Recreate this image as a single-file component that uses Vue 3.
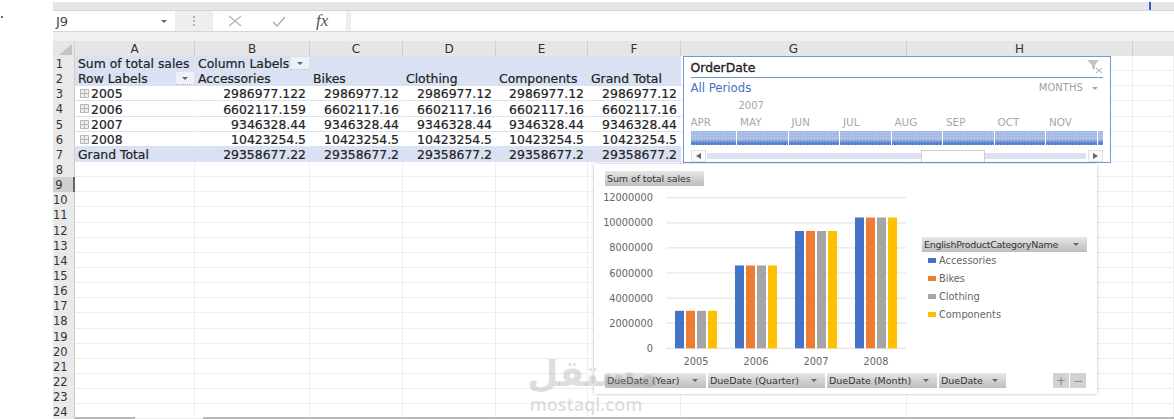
<template>
  <div class="app">
    <span class="stray-dot"></span>
    <div class="top-strip"><span class="top-tick"></span></div>

    <div class="formula-bar">
      <div class="name-box">
        <span>J9</span>
        <i class="caret caret-dark"></i>
      </div>
      <div class="dots"><b></b><b></b><b></b></div>
      <div class="fx-box">
        <svg width="14" height="12" viewBox="0 0 14 12">
          <path d="M1 1l12 10M13 1L1 11" stroke="#b4b4b4" stroke-width="1.3" fill="none" />
        </svg>
        <svg width="14" height="12" viewBox="0 0 14 12">
          <path d="M1 7l4 4 8-9" stroke="#b4b4b4" stroke-width="1.6" fill="none" />
        </svg>
        <span class="fx">fx</span>
      </div>
      <div class="formula-input"></div>
    </div>
    <div class="ribbon-gap"></div>

    <div class="sheet">
      <div class="corner"><span></span></div>
      <div v-for="c in columns" :key="c" class="col-head">{{ c }}</div>

      <template v-for="(row, r) in rows" :key="r">
        <div class="row-head" :class="{ active: r === 8 }">{{ r + 1 }}</div>
        <div
          v-for="(cell, c) in row"
          :key="c"
          class="cell"
          :class="cellClass(r, c)"
        >
          <svg v-if="r >= 2 && r <= 5 && c === 0" class="plus" width="9" height="9" viewBox="0 0 9 9">
            <path d="M.5.5h8v8h-8zM4.5.5v8M.5 4.5h8" stroke="#b7b7b7" fill="#eee" />
          </svg>
          <span>{{ cell }}</span>
          <span v-if="(r === 0 && c === 1) || (r === 1 && c === 0)" class="filter-btn">
            <i class="caret caret-dark"></i>
          </span>
        </div>
      </template>

      <div class="slicer">
        <div class="slicer-title">
          <span>OrderDate</span>
          <svg width="16" height="14" viewBox="0 0 16 14">
            <path d="M0 0h12L8 5v5L5 8V5z" fill="#c4c4c4" />
            <path d="M9 8l6 5M15 8l-6 5" stroke="#a8a8a8" fill="none" />
          </svg>
        </div>
        <div class="slicer-range">
          <span class="all-periods">All Periods</span>
          <span class="months-pick">MONTHS <i class="caret caret-light"></i></span>
        </div>
        <div class="slicer-year">2007</div>
        <div class="tiles">
          <div v-for="m in months" :key="m.label" class="tile" :class="{ first: m.first }">
            <span class="tile-label">{{ m.label }}</span>
            <span class="tile-bar"></span>
          </div>
          <div class="tile tail"><span class="tile-label"></span><span class="tile-bar"></span></div>
        </div>
        <div class="slicer-scroll">
          <span class="scroll-btn"><i class="tri-left"></i></span>
          <span class="scroll-track"><span class="scroll-thumb"></span></span>
          <span class="scroll-btn"><i class="tri-right"></i></span>
        </div>
      </div>

      <div class="chart">
        <div class="field-btn value-btn">Sum of total sales</div>
        <div class="chart-mid">
          <svg class="plot" width="320" height="182" viewBox="594 188 320 182">
            <g v-for="t in ticks" :key="t">
              <line x1="666" x2="906" :y1="valueY(t)" :y2="valueY(t)" stroke="#e6e6e6" stroke-width="1.2" />
              <text x="653" :y="valueY(t) + 3.5" text-anchor="end" class="axis-text">{{ t }}</text>
            </g>
            <g v-for="(y, i) in years" :key="y.year">
              <rect
                v-for="(s, j) in series"
                :key="s.name"
                :x="675 + i * 60 + j * 11"
                :y="valueY(y.value)"
                width="9"
                :height="348.3 - valueY(y.value)"
                :fill="s.color"
              />
              <text :x="696 + i * 60" y="364.5" text-anchor="middle" class="axis-text">{{ y.year }}</text>
            </g>
          </svg>
          <div class="legend">
            <div class="field-btn legend-btn">
              <span>EnglishProductCategoryName</span><i class="caret caret-dark"></i>
            </div>
            <div v-for="s in series" :key="s.name" class="legend-item">
              <span class="swatch" :style="{ background: s.color }"></span>{{ s.name }}
            </div>
          </div>
        </div>
        <div class="chart-foot">
          <div
            v-for="b in axisButtons"
            :key="b.label"
            class="field-btn axis-btn"
            :style="{ width: b.width + 'px' }"
          >
            <span>{{ b.label }}</span><i class="caret caret-dark"></i>
          </div>
          <div class="zoom-btns">
            <span class="zoom-btn">+</span>
            <span class="zoom-btn">−</span>
          </div>
        </div>
      </div>

      <div class="watermark">
        <span class="wm-ar">مستقل</span>
        <span class="wm-en">mostaql.com</span>
      </div>

      <div class="hscroll"></div>
    </div>
  </div>
</template>

<script setup>
const columns = ["A", "B", "C", "D", "E", "F", "G", "H", ""];

const pivot = [
  ["Sum of total sales", "Column Labels", "", "", "", ""],
  ["Row Labels", "Accessories", "Bikes", "Clothing", "Components", "Grand Total"],
  ["2005", "2986977.122", "2986977.12", "2986977.12", "2986977.12", "2986977.12"],
  ["2006", "6602117.159", "6602117.16", "6602117.16", "6602117.16", "6602117.16"],
  ["2007", "9346328.44", "9346328.44", "9346328.44", "9346328.44", "9346328.44"],
  ["2008", "10423254.5", "10423254.5", "10423254.5", "10423254.5", "10423254.5"],
  ["Grand Total", "29358677.22", "29358677.2", "29358677.2", "29358677.2", "29358677.2"],
];

const rows = Array.from({ length: 24 }, (_, i) => {
  const base = pivot[i] || ["", "", "", "", "", ""];
  return [...base, "", "", ""];
});

const cellClass = (r, c) => ({
  band: c < 6 && (r === 0 || r === 1 || r === 6),
  line: c < 6 && r >= 2 && r <= 5,
  num: r >= 2 && r <= 6 && c >= 1 && c < 6,
  year: r >= 2 && r <= 5 && c === 0,
});

const months = [
  { label: "APR", first: true },
  { label: "MAY" },
  { label: "JUN" },
  { label: "JUL" },
  { label: "AUG" },
  { label: "SEP" },
  { label: "OCT" },
  { label: "NOV" },
];

const ticks = [12000000, 10000000, 8000000, 6000000, 4000000, 2000000, 0];

const years = [
  { year: 2005, value: 2986977 },
  { year: 2006, value: 6602117 },
  { year: 2007, value: 9346328 },
  { year: 2008, value: 10423254 },
];

const series = [
  { name: "Accessories", color: "#4472c4" },
  { name: "Bikes", color: "#ed7d31" },
  { name: "Clothing", color: "#a5a5a5" },
  { name: "Components", color: "#ffc000" },
];

const axisButtons = [
  { label: "DueDate (Year)", width: 101 },
  { label: "DueDate (Quarter)", width: 117 },
  { label: "DueDate (Month)", width: 110 },
  { label: "DueDate", width: 67 },
];

const valueY = (v) => 348.3 - (v * 150.6) / 12000000;
</script>

<style>
html,
body {
  margin: 0;
  background: #fff;
}
</style>

<style scoped>
.app {
  position: relative;
  width: 1174px;
  height: 419px;
  overflow: hidden;
  box-sizing: border-box;
  padding: 2px 0 0 53px;
  background: #fff;
  font-family: "DejaVu Sans", sans-serif;
  color: #222;
}

.stray-dot {
  position: absolute;
  left: 1px;
  top: 16px;
  width: 2px;
  height: 2px;
  background: #4472c4;
}

.top-strip {
  position: relative;
  height: 8px;
  background: #e6e6e6;
  border-bottom: 1px solid #d4d4d4;
}

.top-tick {
  position: absolute;
  left: 1096px;
  top: 0;
  width: 2px;
  height: 8px;
  background: #2f62c4;
}

.formula-bar {
  display: flex;
  align-items: stretch;
  height: 20px;
  background: #eeeeee;
  border-bottom: 1px solid #d6d6d6;
}

.name-box {
  display: flex;
  align-items: center;
  justify-content: space-between;
  width: 122px;
  box-sizing: border-box;
  padding: 0 8px 0 3px;
  background: #fff;
  font-size: 13px;
  color: #444;
}

.dots {
  width: 38px;
  display: flex;
  flex-direction: column;
  align-items: center;
  justify-content: center;
  gap: 2px;
}

.dots b {
  width: 2px;
  height: 2px;
  background: #b5b5b5;
}

.fx-box {
  display: flex;
  align-items: center;
  gap: 30px;
  width: 133px;
  box-sizing: border-box;
  padding-left: 15px;
  background: #fff;
}

.fx {
  font-family: "Liberation Serif", serif;
  font-style: italic;
  font-size: 17px;
  color: #555;
  margin-left: 0;
}

.formula-input {
  flex: 1;
  margin-left: 5px;
  background: #fff;
}

.ribbon-gap {
  height: 9px;
  background: #f0f0f0;
}

.sheet {
  position: relative;
  display: grid;
  grid-template-columns: 22px 120px 115px 93px 93px 92px 93px 226px 226px 1fr;
  grid-template-rows: 15px;
  grid-auto-rows: 15.15px;
}

.corner {
  background: #e6e6e6;
  position: relative;
  border-right: 1px solid #d0d0d0;
  box-sizing: border-box;
}

.corner span {
  position: absolute;
  right: 2px;
  bottom: 1px;
  border-left: 13px solid transparent;
  border-bottom: 11px solid #c4c4c4;
}

.col-head {
  display: flex;
  align-items: center;
  justify-content: center;
  padding-top: 1px;
  background: #e6e6e6;
  border-right: 1px solid #cfcfcf;
  box-sizing: border-box;
  font-size: 12px;
  color: #333;
}

.col-head:nth-child(10) {
  border-right: none;
}

.row-head {
  box-sizing: border-box;
  background: #e9e9e9;
  border-right: 1px solid #cfcfcf;
  padding: 1px 8px 0 0;
  text-align: center;
  font-size: 11.5px;
  line-height: 15px;
  color: #333;
  white-space: nowrap;
}

.row-head.active {
  background: #cfcfcf;
  border-right: 2px solid #666;
}

.cell {
  position: relative;
  display: flex;
  align-items: center;
  min-width: 0;
  box-sizing: border-box;
  padding: 1px 3px 0;
  border-right: 1px solid #eeeeee;
  border-bottom: 1px solid #eeeeee;
  white-space: nowrap;
  font-size: 12.4px;
  -webkit-text-stroke: 0.2px #222;
}

.cell.band {
  background: #d9e1f2;
  border-color: #d9e1f2;
}

.cell.line {
  border-right-color: #fff;
  border-bottom-color: #d9e1f2;
}

.cell.num {
  justify-content: flex-end;
}

.cell.year {
  padding-left: 5px;
}

.plus {
  margin-right: 2px;
  flex: none;
}

.filter-btn {
  position: absolute;
  right: 0;
  top: 1px;
  bottom: 0;
  width: 18px;
  display: flex;
  align-items: center;
  justify-content: center;
  background: #eef1f7;
  border-bottom: 1px dotted #bbb;
  box-sizing: border-box;
}

.caret {
  display: inline-block;
  width: 0;
  height: 0;
  border-left: 3.5px solid transparent;
  border-right: 3.5px solid transparent;
}

.caret-dark {
  border-top: 3.5px solid #666;
}

.caret-light {
  border-top: 3.5px solid #a8a8a8;
  margin-left: 6px;
  vertical-align: 1px;
}

.slicer {
  position: absolute;
  left: 630px;
  top: 15px;
  width: 428px;
  height: 107px;
  box-sizing: border-box;
  padding: 0 7px 0 6.5px;
  display: flex;
  flex-direction: column;
  background: #fff;
  border-style: solid;
  border-width: 1px 1.5px 1.5px 1.5px;
  border-color: #7396dc;
}

.slicer-title {
  display: flex;
  align-items: center;
  justify-content: space-between;
  height: 20px;
  border-bottom: 1.5px solid #7396dc;
  font-size: 12.4px;
  color: #222;
  -webkit-text-stroke: 0.35px #222;
}

.slicer-range {
  display: flex;
  align-items: center;
  justify-content: space-between;
  height: 19px;
  font-size: 11.7px;
  color: #4472c4;
}

.months-pick {
  font-size: 10px;
  color: #a0a0a0;
  padding-right: 5px;
}

.slicer-year {
  height: 17px;
  line-height: 18px;
  padding-left: 48px;
  font-size: 10px;
  color: #a8a8a8;
}

.tiles {
  display: flex;
  height: 31px;
  overflow: hidden;
}

.tile {
  flex: none;
  width: 51.5px;
  display: flex;
  flex-direction: column;
}

.tile.first {
  width: 46.5px;
}

.tile.tail {
  width: 7px;
}

.tile-label {
  height: 17px;
  line-height: 17px;
  padding-left: 3px;
  font-size: 10.4px;
  color: #a8a8a8;
  white-space: nowrap;
}

.tile.first .tile-label {
  margin-left: -3px;
}

.tile-bar {
  flex: 1;
  margin-right: 1px;
  background-image:
    radial-gradient(circle, rgba(255, 255, 255, 0.35) 0.7px, transparent 0.8px),
    linear-gradient(#a3b8e6 0%, #a9bde8 60%, #7092d6 75%, #4472c4 100%);
  background-size: 3px 3px, 100% 100%;
}

.slicer-scroll {
  display: flex;
  align-items: center;
  margin-top: 5px;
  height: 12px;
}

.scroll-btn {
  flex: none;
  width: 15px;
  height: 12px;
  display: flex;
  align-items: center;
  justify-content: center;
  background: #fbfbfb;
  border: 1px solid #e2e2e2;
  box-sizing: border-box;
}

.tri-left,
.tri-right {
  width: 0;
  height: 0;
  border-top: 3.5px solid transparent;
  border-bottom: 3.5px solid transparent;
}

.tri-left {
  border-right: 5px solid #666;
}

.tri-right {
  border-left: 5px solid #666;
}

.scroll-track {
  position: relative;
  flex: 1;
  height: 6px;
  margin: 0 2px 0 1px;
  background: #dbe3f3;
}

.scroll-thumb {
  position: absolute;
  left: 214px;
  top: -3px;
  width: 64px;
  height: 12px;
  box-sizing: border-box;
  background: #fff;
  border: 1px solid #d0d0d0;
  border-bottom: none;
}

.chart {
  position: absolute;
  left: 541px;
  top: 123px;
  width: 503px;
  height: 230px;
  box-sizing: border-box;
  padding-top: 7px;
  display: flex;
  flex-direction: column;
  background: #fff;
  box-shadow: 0 0 3px rgba(0, 0, 0, 0.28);
}

.field-btn {
  display: flex;
  align-items: center;
  justify-content: space-between;
  box-sizing: border-box;
  height: 15px;
  padding: 0 8px 0 2px;
  background: linear-gradient(#e6e6e6, #bdbdbd);
  font-size: 9.5px;
  color: #333;
  white-space: nowrap;
}

.value-btn {
  width: 99px;
  margin-left: 11px;
  letter-spacing: -0.1px;
}

.chart-mid {
  display: flex;
  height: 185px;
  margin-top: 2px;
}

.plot {
  flex: none;
  display: block;
}

.axis-text {
  font-size: 9.8px;
  fill: #666;
}

.legend {
  width: 165px;
  margin: 49px 0 0 8px;
  display: flex;
  flex-direction: column;
}

.legend-btn {
  letter-spacing: -0.3px;
  margin-bottom: -1px;
}

.legend-item {
  display: flex;
  align-items: center;
  height: 18.2px;
  padding-left: 6px;
  font-size: 9.8px;
  color: #666;
}

.swatch {
  width: 8px;
  height: 5px;
  margin-right: 3px;
}

.chart-foot {
  display: flex;
  gap: 2px;
  padding-left: 11px;
}

.axis-btn {
  flex: none;
}

.zoom-btns {
  display: flex;
  gap: 1px;
  margin-left: 45px;
}

.zoom-btn {
  width: 16px;
  height: 15px;
  display: flex;
  align-items: center;
  justify-content: center;
  background: #d2d2d2;
  font-size: 12px;
  color: #8a8a8a;
}

.watermark {
  position: absolute;
  left: 474px;
  top: 315px;
  width: 118px;
  display: flex;
  flex-direction: column;
  align-items: center;
  color: rgba(160, 160, 160, 0.36);
  line-height: 1;
  pointer-events: none;
}

.wm-ar {
  font-size: 36px;
  font-weight: 700;
  height: 39px;
  margin-left: 14px;
}

.wm-en {
  font-size: 18px;
  font-weight: 600;
  font-family: "Open Sans", sans-serif;
}

.hscroll {
  position: absolute;
  left: 22px;
  right: 0;
  top: 376px;
  height: 1.5px;
  background: linear-gradient(90deg, #b9b9b9 60px, transparent 60px, transparent 128px, #b9b9b9 128px);
}
</style>
